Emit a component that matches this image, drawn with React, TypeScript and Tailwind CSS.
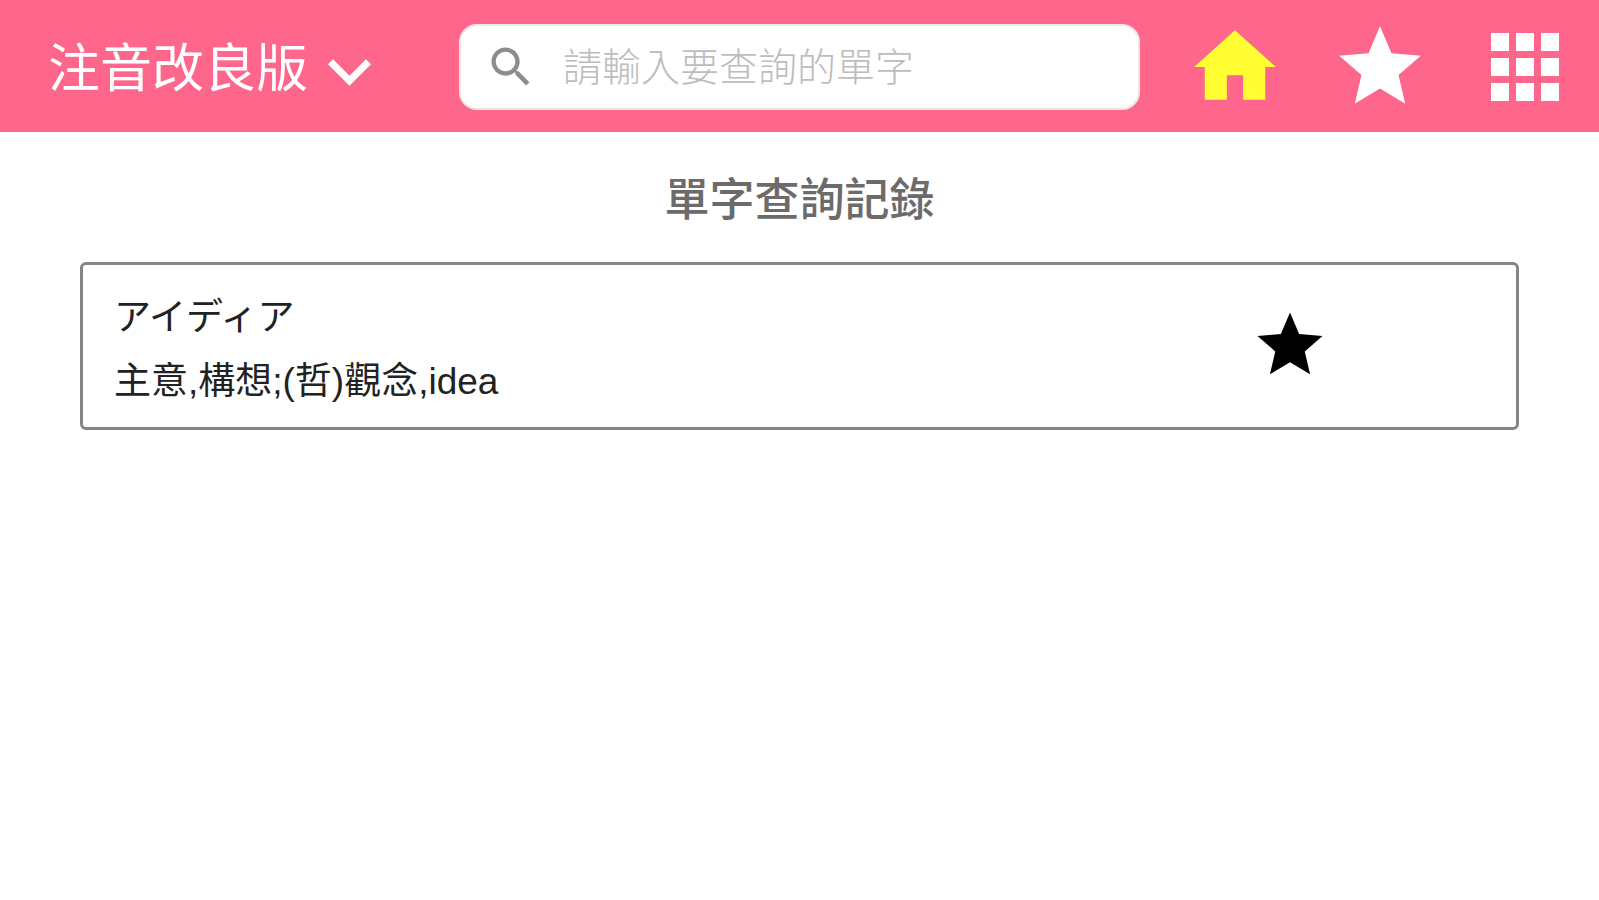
import { useState } from "react";

const STAR =
  "M12 17.27L18.18 21l-1.64-7.03L22 9.24l-7.19-.61L12 2 9.19 8.63 2 9.24l5.46 4.73L5.82 21z";

const CELLS = [15, 40, 65];

function HomeIcon() {
  return (
    <svg viewBox="0 0 24 24" className="size-[98px] fill-[#ffff33]" aria-hidden="true">
      <path d="M10 20v-6h4v6h5.4v-8H22L12 3 2 12h2.6v8z" />
    </svg>
  );
}

function StarIcon({ className }: { className: string }) {
  return (
    <svg viewBox="0 0 24 24" className={className} aria-hidden="true">
      <path d={STAR} />
    </svg>
  );
}

function AppsIcon() {
  return (
    <svg viewBox="0 0 98 98" className="size-[98px] fill-white" aria-hidden="true">
      {CELLS.map((y) =>
        CELLS.map((x) => <rect key={`${x}-${y}`} x={x} y={y} width="18" height="18" />)
      )}
    </svg>
  );
}

function Header() {
  const [query, setQuery] = useState("");
  return (
    <header className="flex h-[132px] items-center bg-[#ff668c] pt-0.5 pr-0.5">
      <div className="relative flex w-[459px] shrink-0 items-center pt-1 pl-12">
        <select
          aria-label="字典"
          className="w-[324px] cursor-pointer appearance-none bg-transparent text-[52px] leading-[76px] font-normal text-white outline-none"
        >
          <option>注音改良版</option>
        </select>
        <svg
          viewBox="6 8.59 12 7.41"
          className="pointer-events-none absolute top-8 left-[328px] h-[27px] w-[43px] fill-white"
          aria-hidden="true"
        >
          <path d="M16.59 8.59L12 13.17 7.41 8.59 6 10l6 6 6-6z" />
        </svg>
      </div>
      <label className="flex h-[86px] min-w-0 flex-1 items-center gap-[26px] rounded-[18px] border-2 border-[#e9e6e4] bg-white pr-4 pl-6">
        <svg viewBox="0 0 24 24" className="size-[52px] shrink-0 fill-[#8c8c8c]" aria-hidden="true">
          <path d="M15.5 14h-.79l-.28-.27C15.41 12.59 16 11.11 16 9.5 16 5.91 13.09 3 9.5 3S3 5.91 3 9.5 5.91 16 9.5 16c1.61 0 3.09-.59 4.23-1.57l.27.28v.79l5 4.99L20.49 19l-4.99-5zm-6 0C7.01 14 5 11.99 5 9.5S7.01 5 9.5 5 14 7.01 14 9.5 11.99 14 9.5 14z" />
        </svg>
        <input
          type="text"
          aria-label="查詢單字"
          placeholder="請輸入要查詢的單字"
          value={query}
          onChange={(e) => setQuery(e.target.value)}
          className="h-[60px] w-full min-w-0 bg-transparent pt-0.5 text-[39px] font-light text-black outline-none placeholder:text-[#bdbdbd]"
        />
      </label>
      <nav className="ml-[22px] grid shrink-0 grid-cols-[145px_145px_145px] justify-items-center">
        <a href="#home" aria-label="首頁">
          <HomeIcon />
        </a>
        <a href="#favorites" aria-label="收藏">
          <StarIcon className="size-[98px] fill-white" />
        </a>
        <a href="#apps" aria-label="選單">
          <AppsIcon />
        </a>
      </nav>
    </header>
  );
}

export default function App() {
  return (
    <div className="min-h-screen bg-white font-['Liberation_Sans','Noto_Sans_CJK_TC',sans-serif]">
      <Header />
      <main className="px-[5%] pt-9">
        <h1 className="text-center text-[45px] leading-[66px] font-medium text-[#6b6b6b]">
          單字查詢記錄
        </h1>
        <article className="mt-7 flex h-[168px] items-center rounded-md border-[3px] border-[#858585] pl-[31px]">
          <div className="flex-1 pt-2 text-[37px] leading-[64px] text-[#222]">
            <p lang="ja" className="font-['Liberation_Sans','Noto_Sans_CJK_JP',sans-serif]">アイディア</p>
            <p>主意,構想;(哲)觀念,idea</p>
          </div>
          <button type="button" aria-label="加入收藏" className="mr-[187px] mb-0.5 cursor-pointer">
            <StarIcon className="size-[78px] fill-black" />
          </button>
        </article>
      </main>
    </div>
  );
}
